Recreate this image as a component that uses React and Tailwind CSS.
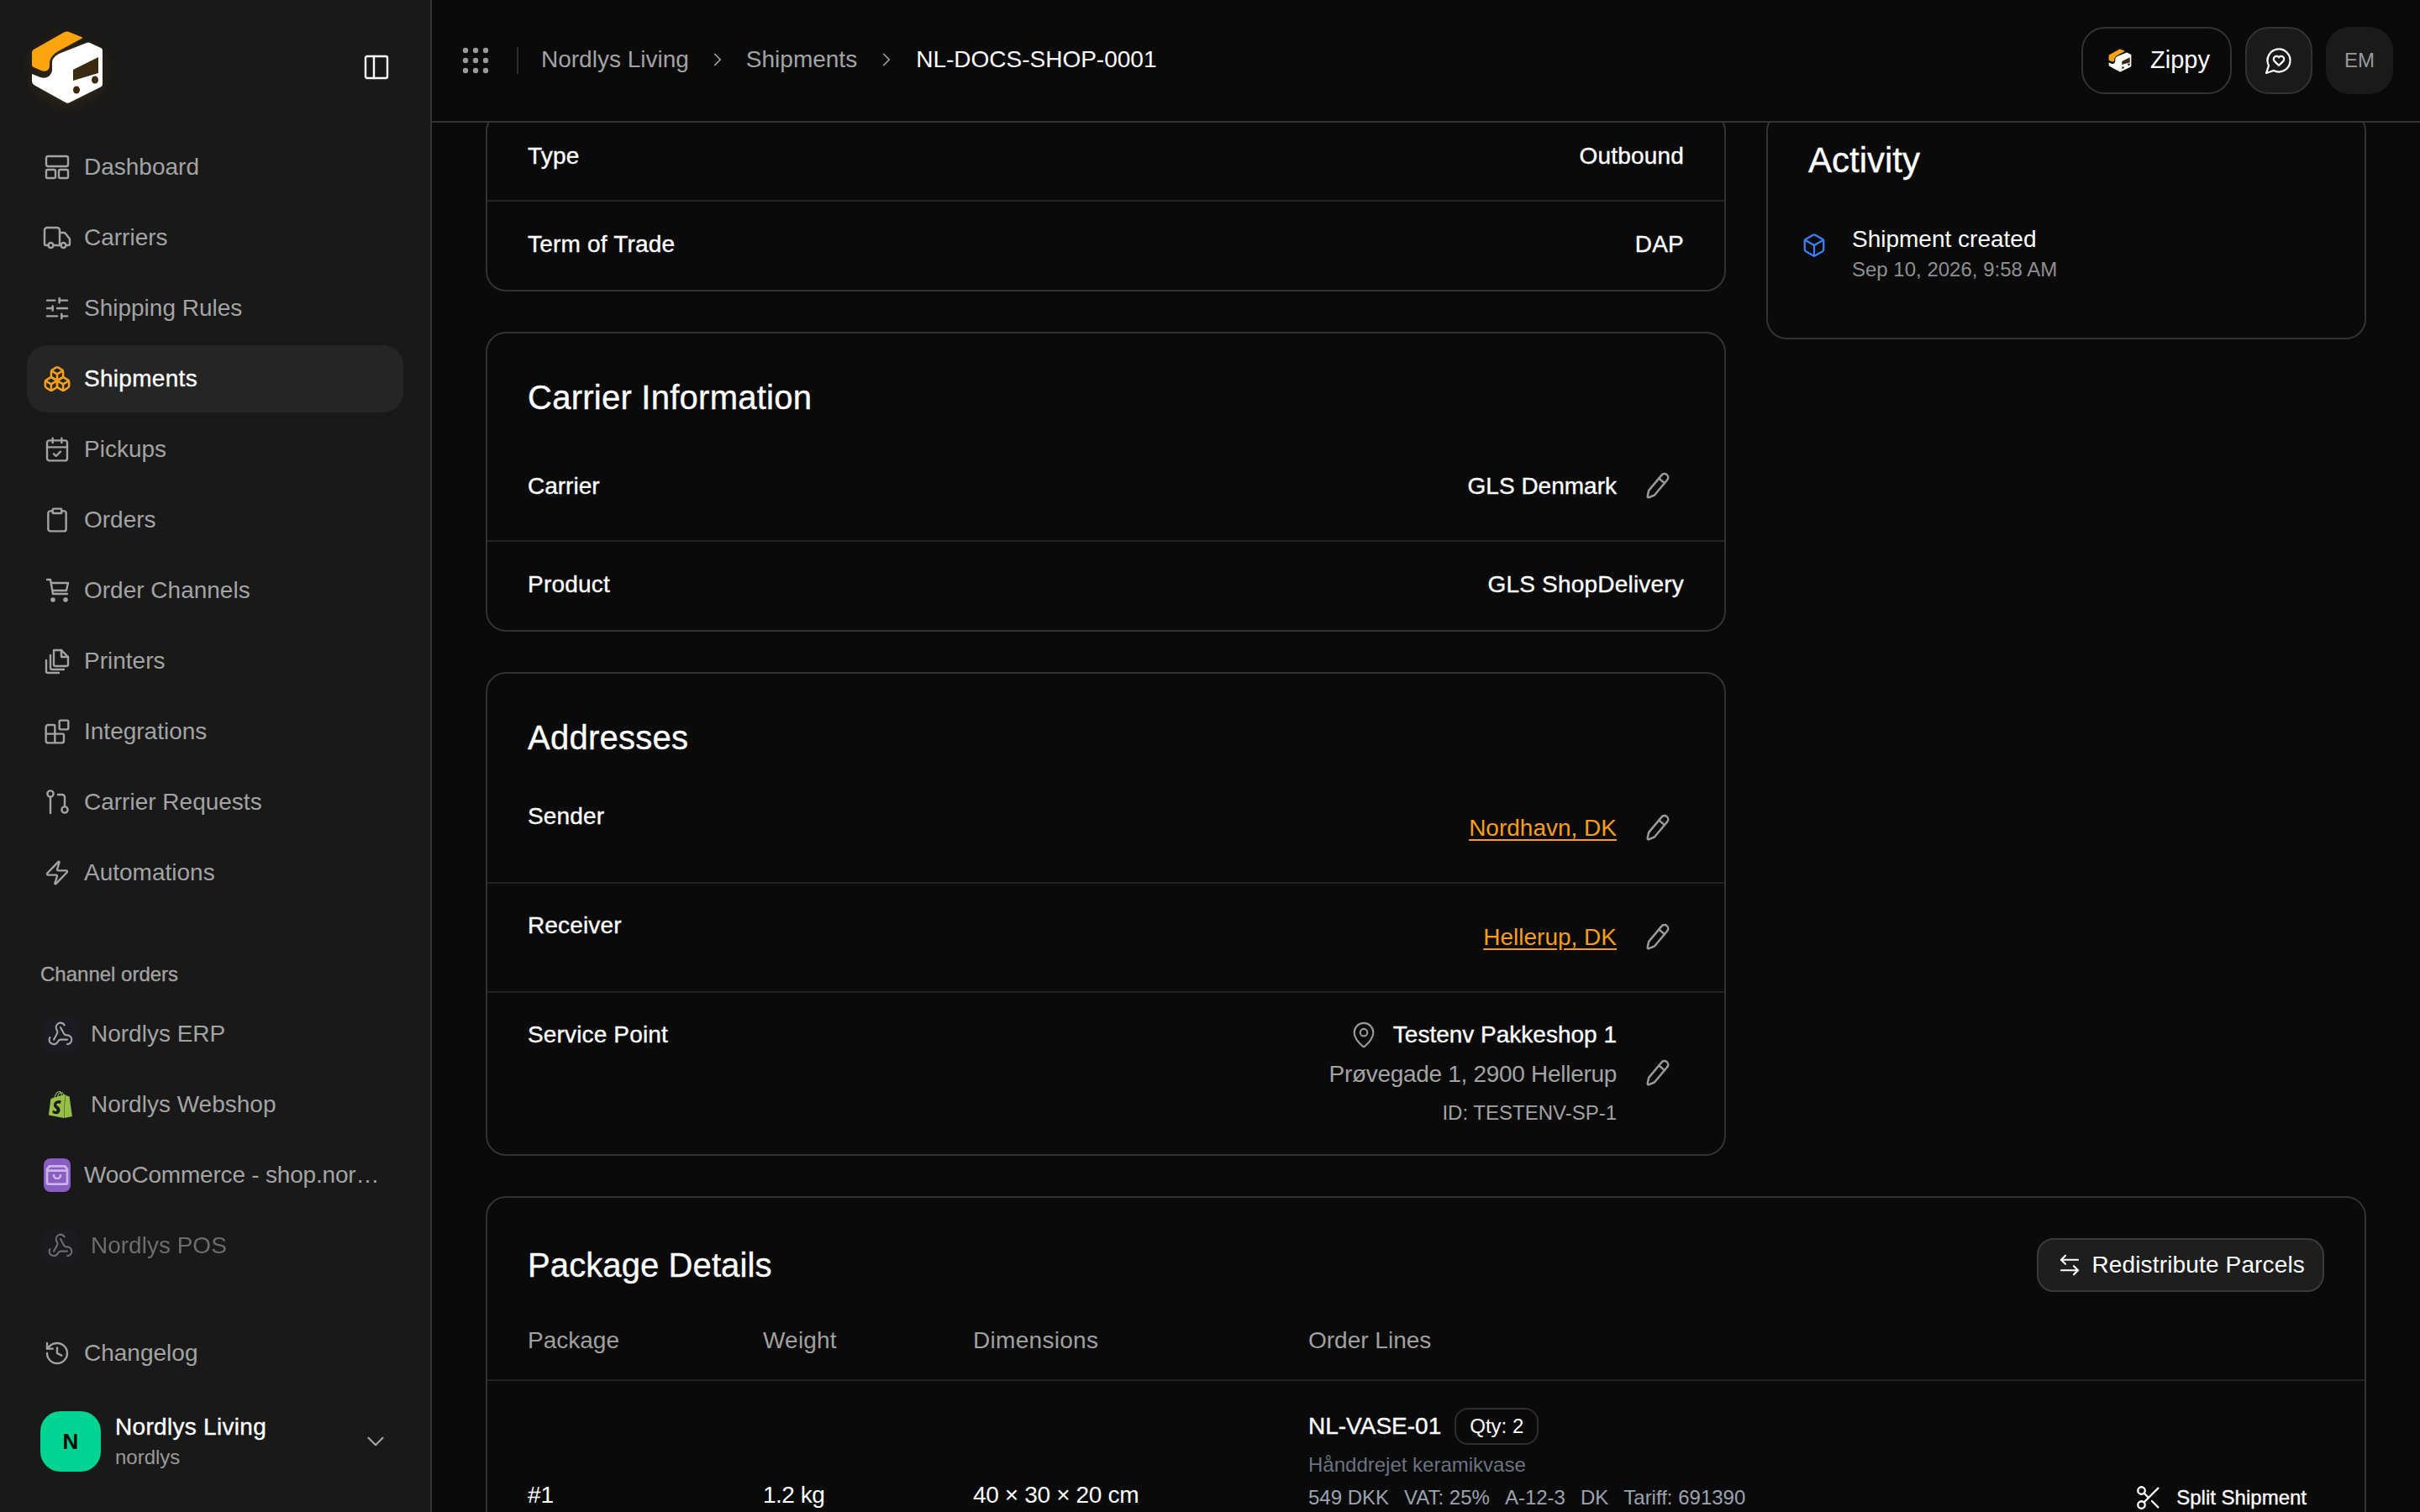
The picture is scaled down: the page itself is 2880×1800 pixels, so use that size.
import React from "react";
import {
  Truck,
  SlidersHorizontal,
  Boxes,
  CalendarCheck,
  Clipboard,
  Blocks,
  Zap,
  History,
  Webhook,
  ChevronDown,
  ChevronRight,
  ArrowLeftRight,
  Scissors,
  MapPin,
  Box,
} from "lucide-react";
import { SiShopify } from "react-icons/si";

// Liberation has no medium weight, so thicken it a little by hand
const medium = "[-webkit-text-stroke:0.35px]";

const Logo = ({ className }) => (
  <svg viewBox="36 36 88 88" className={className}>
    <path
      d="M40 59 77 38a6 6 0 0 1 5 0l15 6a1 1 0 0 1 0 2L71 60c-7 4-11 8-12 14v4c0 6-5 8-10 6l-9-4c-2-1-2-2-2-4V62c0-1 1-2 2-3Z"
      fill="#fba40e"
    />
    <path
      d="M103 51a4 4 0 0 1 4 0l13 6c2 1 2 2 2 4v39c0 2-1 3-3 4l-36 18a5 5 0 0 1-5 0l-36-20c-2-1-4-3-4-5V88l10 4c6 2 12 0 14-8v-9c0-5 3-8 8-11Z"
      fill="#fff"
    />
    <path d="M87 83 117 68v19L87 96Z" fill="#3a2a12" />
    <ellipse cx="91" cy="107" rx="4" ry="4.5" fill="#3a2a12" />
    <ellipse cx="113" cy="95" rx="4" ry="4.5" fill="#3a2a12" />
  </svg>
);

const Svg = ({ children, className = "w-8 h-8", strokeWidth = "2.4" }) => (
  <svg
    viewBox="0 0 32 32"
    fill="none"
    stroke="currentColor"
    strokeWidth={strokeWidth}
    strokeLinecap="round"
    strokeLinejoin="round"
    className={className}
  >
    {children}
  </svg>
);

const DashboardIcon = () => (
  <Svg>
    <rect x="3" y="3" width="26" height="12" rx="2" />
    <rect x="3" y="19" width="11" height="10" rx="1.5" />
    <rect x="18" y="19" width="11" height="10" rx="1.5" />
  </Svg>
);

const CartIcon = () => (
  <Svg>
    <path d="M4 3h4l3 17h17" />
    <path d="M9 7h20l-2 9H11" />
    <circle cx="11" cy="27" r="1.6" fill="currentColor" />
    <circle cx="26" cy="27" r="1.6" fill="currentColor" />
  </Svg>
);

const PrintersIcon = () => (
  <Svg>
    <path d="M12 3h9l8 8v9a2 2 0 0 1-2 2H14a2 2 0 0 1-2-2Z" />
    <path d="M21 3v8h8" />
    <path d="M8 9v15a2 2 0 0 0 2 2h14" />
    <path d="M3 15v13a2 2 0 0 0 2 2h13" />
  </Svg>
);

const RequestsIcon = () => (
  <Svg>
    <circle cx="8" cy="6" r="3.6" />
    <path d="M8 10v19" />
    <circle cx="25" cy="25" r="3.6" />
    <path d="M25 21V10a3 3 0 0 0-3-3h-5" />
  </Svg>
);

const PencilIcon = () => (
  <Svg className="w-10 h-10 text-[#9a9a9a]" strokeWidth="2">
    <g transform="rotate(40 16 16)">
      <path d="M12.5 5a3.5 3.5 0 0 1 7 0v19l-2.6 5a1 1 0 0 1-1.8 0l-2.6-5Z" />
      <path d="M12.5 9h7" />
    </g>
  </Svg>
);

const PanelIcon = () => (
  <Svg className="w-8 h-8 text-white">
    <rect x="3" y="3" width="26" height="26" rx="2" />
    <path d="M13 3v26" />
  </Svg>
);

const DotsIcon = () => (
  <svg viewBox="0 0 32 32" fill="#9a9a9a" className="w-8 h-8">
    {[4, 16, 28].map((y) =>
      [4, 16, 28].map((x) => <circle key={x + "-" + y} cx={x} cy={y} r="3.2" />)
    )}
  </svg>
);

const ChatHeartIcon = () => (
  <svg
    viewBox="0 0 24 24"
    fill="none"
    stroke="#fff"
    strokeWidth="1.5"
    strokeLinecap="round"
    strokeLinejoin="round"
    className="w-9 h-9"
  >
    <path d="M7.9 20A9 9 0 1 0 4 16.1L2 22Z" />
    <path d="M12 16l-3.6-3.6a2.3 2.3 0 0 1 3.6-2.9 2.3 2.3 0 0 1 3.6 2.9Z" />
  </svg>
);

const navIconProps = { size: 32, strokeWidth: 1.8 };

const navItems = [
  { label: "Dashboard", icon: <DashboardIcon /> },
  { label: "Carriers", icon: <Truck size={36} strokeWidth={1.6} className="-mx-0.5" /> },
  { label: "Shipping Rules", icon: <SlidersHorizontal {...navIconProps} /> },
  {
    label: "Shipments",
    icon: <Boxes size={34} strokeWidth={1.8} className="-mx-px text-[#f7a01e]" />,
    active: true,
  },
  { label: "Pickups", icon: <CalendarCheck {...navIconProps} /> },
  { label: "Orders", icon: <Clipboard {...navIconProps} /> },
  { label: "Order Channels", icon: <CartIcon /> },
  { label: "Printers", icon: <PrintersIcon /> },
  { label: "Integrations", icon: <Blocks {...navIconProps} /> },
  { label: "Carrier Requests", icon: <RequestsIcon /> },
  { label: "Automations", icon: <Zap {...navIconProps} /> },
];

const NavItem = ({ label, icon, active }) => (
  <div
    className={
      active
        ? "flex items-center gap-4 h-20 px-5 rounded-3xl bg-[#252525] text-white text-[28px] tracking-[0.3px] " + medium
        : "flex items-center gap-4 h-20 px-5 rounded-3xl text-[#a3a3a3] text-[28px]"
    }
  >
    {icon}
    <span>{label}</span>
  </div>
);

const WebhookTile = () => (
  <div className="w-10 h-10 rounded-lg bg-[#1b1b24] flex items-center justify-center">
    <Webhook size={32} strokeWidth={1.6} />
  </div>
);

const Sidebar = () => (
  <aside className="w-[514px] h-full shrink-0 flex flex-col bg-[#191919] border-r-2 border-[#333]">
    <div className="flex items-center justify-between pt-9 pl-[36px] pr-12">
      <Logo className="w-[88px] h-[88px] drop-shadow-[0_4px_8px_rgba(245,158,11,0.12)]" />
      <PanelIcon />
    </div>

    <nav className="mt-[35px] px-8 flex flex-col gap-1">
      {navItems.map((item) => (
        <NavItem key={item.label} {...item} />
      ))}
    </nav>

    <div className={"mt-[65px] pl-12 h-8 flex items-center text-2xl text-[#a3a3a3] " + medium}>
      Channel orders
    </div>
    <div className="mt-[15px] px-8 flex flex-col gap-1 text-[28px] text-[#a3a3a3]">
      <div className="flex items-center gap-4 h-20 px-5">
        <WebhookTile />
        <span>Nordlys ERP</span>
      </div>
      <div className="flex items-center gap-4 h-20 px-5">
        <div className="w-10 h-10 flex items-center justify-center">
          <SiShopify size={32} className="text-[#95bf47]" />
        </div>
        <span>Nordlys Webshop</span>
      </div>
      <div className="flex items-center gap-4 h-20 px-5">
        <div className="w-8 h-10 shrink-0 rounded-lg bg-[#8a5cc4] flex items-center justify-center">
          <svg
            viewBox="0 0 24 24"
            fill="none"
            stroke="#c9b5e6"
            strokeWidth="2"
            strokeLinecap="round"
            strokeLinejoin="round"
            className="w-8 h-8"
          >
            <path d="M3 7l2-3h14l2 3v12a1 1 0 0 1-1 1H4a1 1 0 0 1-1-1Z" />
            <path d="M3 8h18" />
            <path d="M9 12a3 3 0 0 0 6 0" />
          </svg>
        </div>
        <span className="w-[354px] shrink-0 truncate tracking-[-0.2px]">WooCommerce - shop.nordlys.dk</span>
      </div>
      <div className="flex items-center gap-4 h-20 px-5 opacity-60">
        <WebhookTile />
        <span>Nordlys POS</span>
      </div>
    </div>

    <div className="mt-auto px-8">
      <NavItem label="Changelog" icon={<History {...navIconProps} />} />
    </div>
    <div className="mt-[29px] mb-12 pl-12 pr-[48px] flex items-center">
      <div className="w-[72px] h-[72px] rounded-3xl bg-[#00d492] flex items-center justify-center text-[26px] font-bold text-[#0a0a0a]">
        N
      </div>
      <div className="ml-[17px] flex flex-col">
        <span className={"text-[28px] leading-9 tracking-[0.3px] text-white " + medium}>Nordlys Living</span>
        <span className="text-2xl leading-8 mt-0.5 text-[#999]">nordlys</span>
      </div>
      <ChevronDown size={34} strokeWidth={1.6} className="ml-auto text-[#a3a3a3]" />
    </div>
  </aside>
);

const Header = () => (
  <header className="h-[146px] shrink-0 flex items-center pl-[36px] pr-8 bg-[#0a0a0a] border-b-2 border-[#333]">
    <DotsIcon />
    <div className="w-0.5 h-8 ml-[33px] mr-[27px] bg-[#2e2e2e]" />
    <div className="flex items-center text-[28px] text-[#a3a3a3] -translate-y-px">
      <span>Nordlys Living</span>
      <ChevronRight size={26} strokeWidth={1.6} className="mx-[21px]" />
      <span>Shipments</span>
      <ChevronRight size={26} strokeWidth={1.6} className="mx-[22px]" />
      <span className="text-white">NL-DOCS-SHOP-0001</span>
    </div>
    <div className="ml-auto flex items-center gap-4">
      <div className="h-20 pl-[30px] pr-6 flex items-center gap-[22px] rounded-[28px] border-2 border-[#333] text-[29px] text-white">
        <Logo className="w-7 h-7" />
        <span>Zippy</span>
      </div>
      <div className="w-20 h-20 rounded-[28px] border-2 border-[#333] bg-[#1a1a1a] flex items-center justify-center">
        <ChatHeartIcon />
      </div>
      <div className="w-20 h-20 rounded-[28px] bg-[#1a1a1a] flex items-center justify-center text-2xl text-[#999]">
        EM
      </div>
    </div>
  </header>
);

const Card = ({ title, children, className = "" }) => (
  <section className={"border-2 border-[#333] rounded-3xl bg-[#0a0a0a] " + className}>
    {title && (
      <h2 className={"px-12 pt-12 mb-3 h-[106px] text-[40px] leading-14 tracking-[0.25px] text-white " + medium}>
        {title}
      </h2>
    )}
    {children}
  </section>
);

const EditButton = () => (
  <div className="w-16 h-16 flex items-center justify-center">
    <PencilIcon />
  </div>
);

const SimpleRow = ({ label, value, first, last }) => (
  <div
    className={
      (first ? "border-transparent " : "border-[#222] ") +
      (last ? "h-[107px] " : "h-[104px] ") +
      "border-t-2 px-12 pb-[3px] flex items-center justify-between text-[28px] tracking-[0.2px] text-white " +
      medium
    }
  >
    <span>{label}</span>
    <span>{value}</span>
  </div>
);

const AddressRow = ({ label, value, first }) => (
  <div
    className={
      (first ? "border-transparent " : "border-[#222] ") +
      "border-t-2 px-12 py-8 flex items-start justify-between text-[28px]"
    }
  >
    <span className={"leading-9 tracking-[0.15px] text-white " + medium}>{label}</span>
    <div className="h-16 flex items-center gap-4">
      <a className="text-[#f79e1b] underline underline-offset-4">{value}</a>
      <EditButton />
    </div>
  </div>
);

const Details = () => (
  <div className="flex flex-col gap-12 col-span-2 -mt-[14px]">
    <Card>
      <SimpleRow label="Type" value="Outbound" first />
      <SimpleRow label="Term of Trade" value="DAP" last />
    </Card>

    <Card title="Carrier Information">
      <div className={"px-12 h-[128px] flex items-center justify-between text-[28px] text-white " + medium}>
        <span>Carrier</span>
        <div className="flex items-center gap-4">
          <span>GLS Denmark</span>
          <EditButton />
        </div>
      </div>
      <SimpleRow label="Product" value="GLS ShopDelivery" last />
    </Card>

    <Card title="Addresses">
      <AddressRow label="Sender" value="Nordhavn, DK" first />
      <AddressRow label="Receiver" value="Hellerup, DK" />
      <div className="border-t-2 border-[#222] px-12 pt-8 pb-[33px] flex items-start justify-between text-[28px]">
        <span className={"leading-9 tracking-[0.15px] text-white " + medium}>Service Point</span>
        <div className="flex items-center gap-4">
          <div className="flex flex-col items-end">
            <div className={"h-9 flex items-center gap-[18px] text-white " + medium}>
              <MapPin size={34} strokeWidth={1.5} className="text-[#9a9a9a]" />
              <span>Testenv Pakkeshop 1</span>
            </div>
            <span className="mt-[9px] leading-10 tracking-[-0.3px] text-[#a3a3a3]">Prøvegade 1, 2900 Hellerup</span>
            <span className="mt-[10px] leading-8 text-2xl text-[#a3a3a3]">ID: TESTENV-SP-1</span>
          </div>
          <EditButton />
        </div>
      </div>
    </Card>
  </div>
);

const Activity = () => (
  <div className="-mt-[14px]">
    <Card className="h-[272px] pl-12 pr-12">
      <h2 className={"pt-[29px] text-[42px] leading-14 text-white " + medium}>Activity</h2>
      <div className="mt-[48px] -ml-2 flex items-start gap-[30px]">
        <Box size={30} strokeWidth={1.8} className="mt-[10px] text-[#3b82f6]" />
        <div className="flex flex-col">
          <span className="text-[28px] leading-9 text-white">Shipment created</span>
          <span className="text-2xl leading-8 mt-0.5 text-[#8f8f8f]">Sep 10, 2026, 9:58 AM</span>
        </div>
      </div>
    </Card>
  </div>
);

const PackageDetails = () => (
  <Card className="col-span-3 rounded-b-none">
    <div className="pt-12 px-12 flex items-center justify-between">
      <h2 className={"text-[40px] leading-16 tracking-[0.1px] text-white " + medium}>Package Details</h2>
      <button className="h-16 pl-[22px] pr-[21px] flex items-center gap-[11px] rounded-[20px] bg-[#1e1e1e] border-2 border-[#3a3a3a] text-[28px] tracking-[0.15px] text-white">
        <ArrowLeftRight size={30} strokeWidth={1.7} />
        Redistribute Parcels
      </button>
    </div>
    <div className="mt-[19px] h-[85px] pb-2 px-12 grid grid-cols-[280px_250px_399px_1fr] items-center text-[28px] text-[#a0a0a0]">
      <span>Package</span>
      <span className="tracking-[0.2px]">Weight</span>
      <span className="tracking-[0.3px]">Dimensions</span>
      <span>Order Lines</span>
    </div>
    <div className="border-t-2 border-[#222] h-[274px] px-12 grid grid-cols-[280px_250px_399px_1fr] items-center text-[28px] text-white">
      <span>#1</span>
      <span className="tracking-[-0.5px]">1.2 kg</span>
      <span className="tracking-[-0.35px]">40 × 30 × 20 cm</span>
      <div className="self-start pt-8 flex items-end justify-between">
        <div className="flex flex-col">
          <div className="flex items-center gap-4">
            <span className={medium}>NL-VASE-01</span>
            <span className="h-11 px-4 flex items-center rounded-2xl border-2 border-[#2e2e2e] text-2xl">
              Qty: 2
            </span>
          </div>
          <span className="mt-2 text-2xl leading-8 text-[#6b7280]">Hånddrejet keramikvase</span>
          <div className="mt-[7px] flex gap-[18px] text-2xl leading-8 text-[#9ca3af]">
            <span>549 DKK</span>
            <span>VAT: 25%</span>
            <span>A-12-3</span>
            <span>DK</span>
            <span>Tariff: 691390</span>
          </div>
        </div>
        <div className={"flex items-center gap-4 pr-[21px] text-2xl h-8 " + medium}>
          <Scissors size={34} strokeWidth={1.6} />
          <span>Split Shipment</span>
        </div>
      </div>
    </div>
  </Card>
);

const App = () => (
  <div className="flex w-full h-screen overflow-hidden bg-[#0a0a0a] font-['Liberation_Sans',Arial,sans-serif]">
    <Sidebar />
    <div className="flex-1 min-w-0 flex flex-col">
      <Header />
      <main className="flex-1 min-h-0 overflow-hidden px-16">
        <div className="grid grid-cols-3 gap-12">
          <Details />
          <Activity />
          <PackageDetails />
        </div>
      </main>
    </div>
  </div>
);

export default App;
